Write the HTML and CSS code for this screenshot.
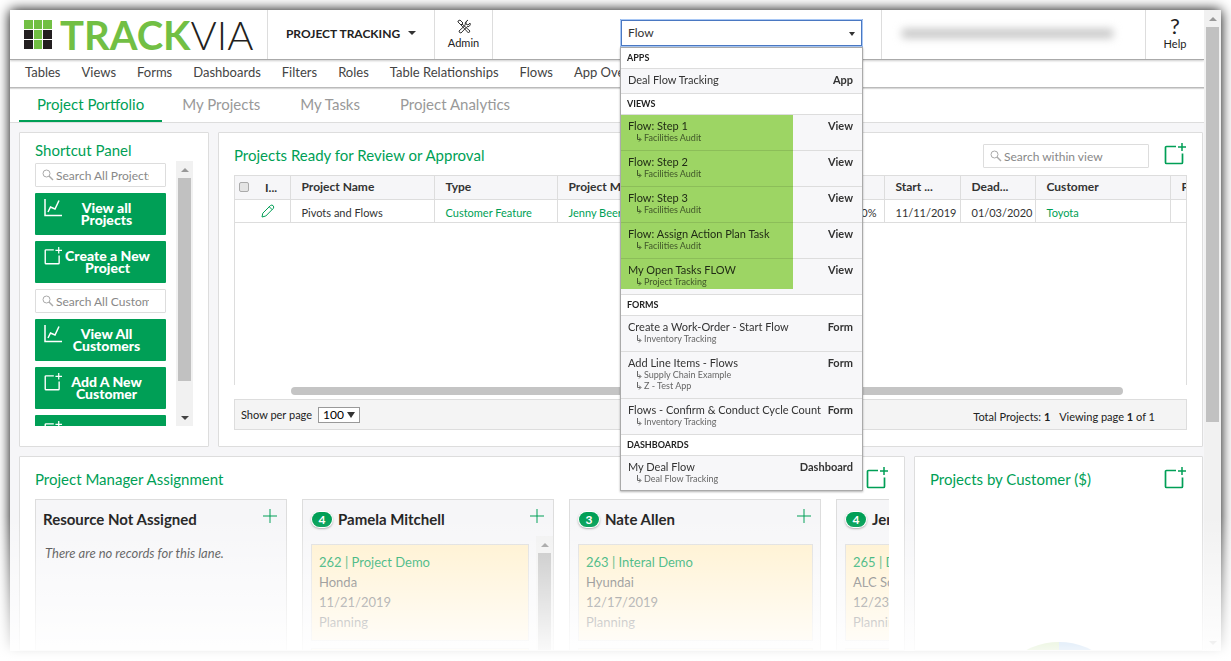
FILE: index.html
```html
<!DOCTYPE html>
<html lang="en">
  <head>
    <meta charset="utf-8">
    <title>TrackVia - Project Tracking</title>
    <link rel="stylesheet" href="styles.css">
  </head>
  <body>
    <svg class="sprite" aria-hidden="true">
      <symbol id="icon-new" viewBox="0 0 22 22">
        <path d="M12 3.500H2.500a1 1 0 0 0-1 1V19.500a1 1 0 0 0 1 1H17.500a1 1 0 0 0 1-1V10.500" fill="none" stroke="currentColor" stroke-width="1.700"/>
        <path d="M18 0v8M14 4h8" fill="none" stroke="currentColor" stroke-width="1.500"/>
      </symbol>
      <symbol id="icon-chart" viewBox="0 0 18 18">
        <path d="M1 0v16.500h17" fill="none" stroke="currentColor" stroke-width="1.500"/>
        <path d="M4 13l2.500-5 4.500 2 4-8.500" fill="none" stroke="currentColor" stroke-width="1.500"/>
      </symbol>
      <symbol id="icon-search" viewBox="0 0 12 12">
        <circle cx="4.500" cy="4.500" r="3.500" fill="none" stroke="currentColor"/>
        <path d="M7 7l4 4" stroke="currentColor" stroke-width="1.500"/>
      </symbol>
      <symbol id="icon-plus" viewBox="0 0 14 14">
        <path d="M7 0v14M0 7h14" stroke="currentColor"/>
      </symbol>
      <symbol id="icon-sub" viewBox="0 0 6 9">
        <path d="M1.500 1v5.500h3M3 4.500l2 2-2 2" fill="none" stroke="currentColor"/>
      </symbol>
      <symbol id="icon-pencil" viewBox="0 0 14 14">
        <path d="M1 13l.8-3.800L9.500 1.500q1.500-1 2.600.2t.3 2.600L4.800 12zM8.300 2.800l2.900 2.900" fill="none" stroke="currentColor"/>
      </symbol>
    </svg>

    <div class="window">
      <div class="page">
        <header class="header">
          <a class="logo" href="#" aria-label="TrackVia">
            <svg class="logo_mark" width="28" height="29" viewBox="0 0 28 29">
              <path fill="#72bf44" d="M0 0h9v9H0zM10 0h8v9h-8zM19 0h9v9h-9zM10 10h8v9h-8zM10 20h8v9h-8z"/>
              <path fill="#231f20" d="M0 10h9v9H0zM19 10h9v9h-9zM0 20h9v9H0zM19 20h9v9h-9z"/>
            </svg>
            <span class="logo_text"><b>TRACK</b>VIA</span>
          </a>
          <button class="app_menu">PROJECT TRACKING <span class="caret"></span></button>
          <button class="tool">
            <svg width="16" height="15" viewBox="0 0 16 15" fill="none" stroke="#333">
              <path d="M2 2l2-1 3 3-2 2-3-3zM6 5l8 7-1.500 2L5 6M12 1l-2 2v2l2 1 2-2q1 2-1 3.500l-2 .2-6 6.300q-2 0-2-2l6-5.500q-.5-4 3-5.500z"/>
            </svg>
            <span>Admin</span>
          </button>
          <div class="search">
            <input class="search_input" aria-label="Search application" value="Flow" autofocus>
            <span class="caret search_caret"></span>
            <div class="results">
              <h3>APPS</h3>
              <ul>
                <li><div>Deal Flow Tracking</div><b>App</b></li>
              </ul>
              <h3>VIEWS</h3>
              <ul class="marked">
                <li><div>Flow: Step 1<small><svg><use href="#icon-sub"/></svg>Facilities Audit</small></div><b>View</b></li>
                <li><div>Flow: Step 2<small><svg><use href="#icon-sub"/></svg>Facilities Audit</small></div><b>View</b></li>
                <li><div>Flow: Step 3<small><svg><use href="#icon-sub"/></svg>Facilities Audit</small></div><b>View</b></li>
                <li><div>Flow: Assign Action Plan Task<small><svg><use href="#icon-sub"/></svg>Facilities Audit</small></div><b>View</b></li>
                <li><div>My Open Tasks FLOW<small><svg><use href="#icon-sub"/></svg>Project Tracking</small></div><b>View</b></li>
              </ul>
              <h3>FORMS</h3>
              <ul>
                <li><div>Create a Work-Order - Start Flow<small><svg><use href="#icon-sub"/></svg>Inventory Tracking</small></div><b>Form</b></li>
                <li><div>Add Line Items - Flows<small><svg><use href="#icon-sub"/></svg>Supply Chain Example</small><small><svg><use href="#icon-sub"/></svg>Z - Test App</small></div><b>Form</b></li>
                <li><div>Flows - Confirm &amp; Conduct Cycle Count<small><svg><use href="#icon-sub"/></svg>Inventory Tracking</small></div><b>Form</b></li>
              </ul>
              <h3>DASHBOARDS</h3>
              <ul>
                <li><div>My Deal Flow<small><svg><use href="#icon-sub"/></svg>Deal Flow Tracking</small></div><b>Dashboard</b></li>
              </ul>
            </div>
          </div>
          <div class="user"><span class="user_name"></span></div>
          <button class="tool help">
            <span class="question">?</span>
            <span>Help</span>
          </button>
        </header>

        <nav class="nav">
          <a href="#">Tables</a>
          <a href="#">Views</a>
          <a href="#">Forms</a>
          <a href="#">Dashboards</a>
          <a href="#">Filters</a>
          <a href="#">Roles</a>
          <a href="#">Table Relationships</a>
          <a href="#">Flows</a>
          <a href="#">App Overview</a>
        </nav>

        <nav class="tabs">
          <a class="active" href="#">Project Portfolio</a>
          <a href="#">My Projects</a>
          <a href="#">My Tasks</a>
          <a href="#">Project Analytics</a>
        </nav>

        <main class="main">
          <div class="row">
            <section class="panel shortcuts">
              <h2>Shortcut Panel</h2>
              <div class="shortcut_body">
                <div class="shortcut_list">
                  <label class="find"><svg><use href="#icon-search"/></svg><input placeholder="Search All Projects" aria-label="Search All Projects"></label>
                  <button class="button"><svg><use href="#icon-chart"/></svg>View all Projects</button>
                  <button class="button wide"><svg><use href="#icon-new"/></svg>Create a New Project</button>
                  <label class="find"><svg><use href="#icon-search"/></svg><input placeholder="Search All Customers" aria-label="Search All Customers"></label>
                  <button class="button"><svg><use href="#icon-chart"/></svg>View All Customers</button>
                  <button class="button"><svg><use href="#icon-new"/></svg>Add A New Customer</button>
                  <button class="button" aria-label="Add"><svg><use href="#icon-new"/></svg></button>
                </div>
                <div class="scrollbar"><i class="up"></i><i class="thumb"></i><i class="down dark"></i></div>
              </div>
            </section>

            <section class="panel view">
              <div class="panel_head">
                <h2>Projects Ready for Review or Approval</h2>
                <label class="find"><svg><use href="#icon-search"/></svg><input placeholder="Search within view" aria-label="Search within view"></label>
                <button class="new" aria-label="Add record"><svg><use href="#icon-new"/></svg></button>
              </div>
              <div class="grid">
                <table>
                  <colgroup>
                    <col class="c_check"><col class="c_icon"><col class="c_name"><col class="c_type"><col class="c_manager">
                    <col class="c_done"><col class="c_start"><col class="c_dead"><col class="c_customer"><col class="c_last">
                  </colgroup>
                  <thead>
                    <tr>
                      <th class="check"><input type="checkbox" aria-label="Select all"></th>
                      <th class="icon">I...</th>
                      <th>Project Name</th>
                      <th>Type</th>
                      <th>Project Manager</th>
                      <th></th>
                      <th>Start ...</th>
                      <th>Dead...</th>
                      <th>Customer</th>
                      <th>Priority</th>
                    </tr>
                  </thead>
                  <tbody>
                    <tr>
                      <td class="check"></td>
                      <td class="icon"><a href="#" aria-label="Edit"><svg><use href="#icon-pencil"/></svg></a></td>
                      <td>Pivots and Flows</td>
                      <td><a href="#">Customer Feature</a></td>
                      <td><a href="#">Jenny Beer</a></td>
                      <td class="number">100%</td>
                      <td>11/11/2019</td>
                      <td>01/03/2020</td>
                      <td><a href="#">Toyota</a></td>
                      <td></td>
                    </tr>
                  </tbody>
                </table>
              </div>
              <div class="track"></div>
              <div class="paging">
                <label for="per_page">Show per page</label>
                <select id="per_page"><option>100</option></select>
                <span class="caret"></span>
                <p>Total Projects: <b>1</b> <span>Viewing page <b>1</b> of 1</span></p>
              </div>
            </section>
          </div>

          <div class="row row_bottom">
            <section class="panel board">
              <div class="panel_head">
                <h2>Project Manager Assignment</h2>
                <button class="new" aria-label="Add record"><svg><use href="#icon-new"/></svg></button>
              </div>
              <div class="lanes">
                <div class="lane">
                  <div class="lane_head"><h4>Resource Not Assigned</h4><svg><use href="#icon-plus"/></svg></div>
                  <p class="empty">There are no records for this lane.</p>
                </div>
                <div class="lane">
                  <div class="lane_head"><span class="count">4</span><h4>Pamela Mitchell</h4><svg><use href="#icon-plus"/></svg></div>
                  <div class="lane_body">
                    <div class="cards">
                      <div class="card"><a href="#">262 | Project Demo</a><p>Honda</p><p>11/21/2019</p><p>Planning</p></div>
                      <div class="card"></div>
                    </div>
                    <div class="scrollbar"><i class="up"></i><i class="thumb"></i></div>
                  </div>
                </div>
                <div class="lane">
                  <div class="lane_head"><span class="count">3</span><h4>Nate Allen</h4><svg><use href="#icon-plus"/></svg></div>
                  <div class="lane_body">
                    <div class="cards">
                      <div class="card"><a href="#">263 | Interal Demo</a><p>Hyundai</p><p>12/17/2019</p><p>Planning</p></div>
                      <div class="card"></div>
                    </div>
                  </div>
                </div>
                <div class="lane">
                  <div class="lane_head"><span class="count">4</span><h4>Jenny Beer</h4></div>
                  <div class="lane_body">
                    <div class="cards">
                      <div class="card"><a href="#">265 | Demo</a><p>ALC Schools</p><p>12/23/2019</p><p>Planning</p></div>
                      <div class="card"></div>
                    </div>
                  </div>
                </div>
              </div>
            </section>

            <section class="panel chart">
              <div class="panel_head">
                <h2>Projects by Customer ($)</h2>
                <button class="new" aria-label="Add record"><svg><use href="#icon-new"/></svg></button>
              </div>
              <svg class="pie" viewBox="0 0 140 140">
                <path d="M70 70V0A70 70 0 0 0 0 70z" fill="#8bc34a"/>
                <path d="M70 70V0A70 70 0 0 1 140 70z" fill="#4a90d9"/>
              </svg>
            </section>
          </div>
        </main>
      </div>
      <div class="scrollbar page_scroll"><i class="up"></i><i class="thumb"></i><i class="down"></i></div>
    </div>
    <div class="fade"></div>
  </body>
</html>
```

FILE: styles.css
```css
* {
  box-sizing: border-box;
}

body {
  margin: 0;
  padding: 10px;
  height: 100vh;
  overflow: hidden;
  background: #fff;
  color: #333;
  font-family: Lato, "Liberation Sans", sans-serif;
  font-size: 12px;
}

a {
  color: #009f56;
  text-decoration: none;
}

h2, h3, h4, p, ul {
  margin: 0;
  padding: 0;
}

button, input, select {
  font-family: inherit;
}

.sprite {
  display: none;
}

.window {
  display: flex;
  height: calc(100vh - 20px);
  overflow: hidden;
  background: #fff;
  box-shadow: 0 0 12px #000;
}

.page {
  display: flex;
  flex-direction: column;
  flex: 1;
  min-width: 0;
}

/* header */
.header {
  display: flex;
  height: 50px;
  flex-shrink: 0;
  border-bottom: 1px solid #aaa;
  box-shadow: 0 1px 2px rgba(0, 0, 0, 0.2);
}

.logo {
  display: flex;
  align-items: center;
  gap: 8px;
  width: 258px;
  padding-left: 14px;
  border-right: 1px solid #ddd;
  color: #231f20;
}

.logo_text {
  font-size: 40px;
  line-height: 48px;
  font-weight: 300;
}

.logo_text b {
  color: #72bf44;
  font-weight: 700;
}

.app_menu, .tool {
  border: 0;
  border-right: 1px solid #ddd;
  background: none;
  color: #222;
}

.app_menu {
  display: flex;
  align-items: center;
  justify-content: center;
  gap: 8px;
  width: 167px;
  padding: 0 0 3px;
  font-size: 12px;
  font-weight: 700;
}

.caret {
  border: 4px solid transparent;
  border-top-color: #333;
  border-bottom: 0;
}

.tool {
  display: flex;
  flex-direction: column;
  align-items: center;
  width: 58px;
  padding: 9px 0 0;
  gap: 2px;
  font-size: 11px;
  line-height: 14px;
}

.tool .question {
  font-size: 22px;
  line-height: 22px;
}

.help {
  width: 58px;
  padding-top: 5px;
  gap: 0;
  border-right: 0;
}

.search {
  position: relative;
  width: 243px;
  margin: 9px 18px 0 auto;
}

.search_input {
  display: block;
  width: 100%;
  height: 28px;
  padding: 0 6px 2px;
  border: 2px solid #4a78c2;
  border-radius: 1px;
  outline: 1px solid #a9c8f5;
  outline-offset: -1px;
  color: #333;
  font-size: 12px;
}

.search_caret {
  position: absolute;
  top: 13px;
  right: 8px;
  border-width: 4px 3px 0;
}

.results {
  position: absolute;
  z-index: 2;
  top: 28px;
  left: 0;
  right: 0;
  border: 1px solid #aaa;
  background: #f7f7f9;
  box-shadow: 0 1px 2px rgba(0, 0, 0, 0.3);
  font-size: 11px;
}

.results h3 {
  height: 21px;
  padding-left: 6px;
  border-bottom: 1px solid #ddd;
  background: #fff;
  color: #222;
  font-size: 9px;
  line-height: 20px;
}

.results ul {
  position: relative;
  list-style: none;
}

.results li {
  display: flex;
  justify-content: space-between;
  padding: 4px 9px 7px 7px;
  border-bottom: 1px solid #ddd;
  line-height: 13px;
  white-space: nowrap;
}

.results ul:last-child li {
  padding-bottom: 6px;
  border-bottom: 0;
}

.results small {
  display: flex;
  align-items: center;
  gap: 2px;
  padding-left: 8px;
  color: #666;
  font-size: 9px;
  line-height: 11px;
}

.results small svg {
  width: 6px;
  height: 9px;
}

/* highlight over the matching views */
.results .marked:after {
  content: "";
  position: absolute;
  top: 0;
  left: 0;
  width: 172px;
  bottom: 6px;
  background: #a2dc66;
  mix-blend-mode: multiply;
}

.user {
  display: flex;
  align-items: center;
  width: 265px;
  padding: 0 32px 3px 20px;
  border-left: 1px solid #ddd;
  border-right: 1px solid #ddd;
}

.user_name {
  flex: 1;
  height: 9px;
  background: #c4c4c4;
  filter: blur(4px);
}

/* navigation */
.nav {
  display: flex;
  gap: 21px;
  height: 28px;
  flex-shrink: 0;
  padding-left: 15px;
  border-bottom: 1px solid #bbb;
  box-shadow: 0 1px 1px rgba(0, 0, 0, 0.15);
  font-size: 13px;
  line-height: 25px;
  white-space: nowrap;
}

.nav a {
  color: #444;
}

.tabs {
  display: flex;
  height: 35px;
  flex-shrink: 0;
  padding-left: 9px;
  border-bottom: 1px solid #ddd;
  font-size: 15px;
  line-height: 33px;
}

.tabs a {
  height: 34px;
  padding: 0 20px;
  color: #999;
}

.tabs .active {
  padding: 0 18px;
  border-bottom: 2px solid #009f56;
  color: #009f56;
}

/* panels */
.main {
  display: flex;
  flex-direction: column;
  flex: 1;
  gap: 9px;
  min-height: 0;
  padding: 9px 1px 0 9px;
  background: #f6f6f8;
}

.row {
  display: flex;
  gap: 9px;
}

.row_bottom {
  display: grid;
  grid-template-columns: 886fr 289fr;
  flex: 1;
  min-height: 0;
}

.panel {
  min-width: 0;
  min-height: 0;
  padding: 10px 15px 0;
  border: 1px solid #ddd;
  border-radius: 1px;
  background: #fff;
}

.panel h2 {
  color: #009f56;
  font-size: 15px;
  font-weight: 400;
  line-height: 18px;
}

.panel_head {
  display: flex;
  align-items: center;
  height: 26px;
}

.panel_head h2 {
  flex: 1;
  padding-bottom: 2px;
}

.new {
  width: 22px;
  height: 22px;
  margin: 0 1px 4px 0;
  padding: 0;
  border: 0;
  background: none;
  color: #009f56;
}

.new svg {
  display: block;
  width: 22px;
  height: 22px;
}

.find {
  display: flex;
  align-items: center;
  gap: 2px;
  height: 24px;
  padding: 0 16px 0 6px;
  border: 1px solid #ddd;
  border-radius: 1px;
  background: #fff;
  color: #aaa;
}

.find svg {
  width: 12px;
  height: 12px;
  flex-shrink: 0;
}

.find input {
  width: 100%;
  min-width: 0;
  padding: 0;
  border: 0;
  font-size: 12px;
}

.find input::placeholder {
  color: #888;
}

.view .find {
  width: 166px;
  margin-right: 15px;
}

.shortcuts {
  width: 190px;
  height: 315px;
  flex-shrink: 0;
  padding-top: 8px;
}

.shortcut_body {
  display: flex;
  gap: 10px;
  height: 265px;
  margin-top: 2px;
}

.shortcut_list {
  display: flex;
  flex-direction: column;
  gap: 6px;
  width: 131px;
  overflow: hidden;
  padding-top: 2px;
}

.shortcut_list .find, .button {
  flex-shrink: 0;
}

.button {
  position: relative;
  height: 42px;
  padding: 0 18px 0 30px;
  border: 0;
  border-radius: 1px;
  background: #009f56;
  color: #fff;
  font-size: 14px;
  font-weight: 900;
  line-height: 12px;
}

.button.wide {
  padding: 0 10px 0 24px;
}

.button svg {
  position: absolute;
  top: 6px;
  left: 9px;
  width: 18px;
  height: 18px;
}

.scrollbar {
  display: flex;
  flex-direction: column;
  align-items: center;
  width: 17px;
  flex-shrink: 0;
  background: #f1f1f1;
}

.scrollbar .up, .scrollbar .down {
  margin: 7px 0 6px;
  border: 4px solid transparent;
}

.scrollbar .up {
  border-top: 0;
  border-bottom-color: #999;
}

.scrollbar .down {
  margin-top: auto;
  border-bottom: 0;
  border-top-color: #999;
}

.scrollbar .dark {
  border-top-color: #444;
}

.scrollbar .thumb {
  width: 13px;
  height: 203px;
  background: #c1c1c1;
}

.page_scroll .thumb {
  height: 395px;
}

/* record table */
.view {
  flex: 1;
}

.grid {
  height: 210px;
  margin-top: 6px;
  overflow: hidden;
  border: 1px solid #ddd;
  border-bottom: 0;
}

.grid table {
  width: 1079px;
  table-layout: fixed;
  border-collapse: collapse;
}

.c_check { width: 21px; }
.c_icon { width: 34px; }
.c_name { width: 144px; }
.c_type { width: 123px; }
.c_manager { width: 147px; }
.c_done { width: 180px; }
.c_start { width: 76px; }
.c_dead { width: 75px; }
.c_customer { width: 135px; }
.c_last { width: 144px; }

.grid th, .grid td {
  height: 23px;
  padding: 0 0 0 11px;
  border-right: 1px solid #ddd;
  border-bottom: 1px solid #ddd;
  text-align: left;
  white-space: nowrap;
}

.grid td {
  padding-top: 3px;
  font-size: 11px;
}

.grid th {
  padding-bottom: 1px;
  background: #f6f6f8;
  font-size: 12px;
}

.grid .check {
  padding: 0;
  border-right: 0;
  text-align: center;
}

.grid .check input {
  display: block;
  appearance: none;
  width: 10px;
  height: 10px;
  margin: 0 0 0 4px;
  border: 1px solid #aaa;
  border-radius: 2px;
  background: #e4e4e4;
}

.grid .icon {
  padding: 0 0 0 9px;
}

.grid td.icon {
  padding-left: 5px;
}

.grid .icon svg {
  display: block;
  width: 14px;
  height: 14px;
}

.grid .number {
  padding-right: 7px;
  text-align: right;
}

.track {
  width: 832px;
  max-width: 88%;
  height: 8px;
  margin: 2px 0 4px 57px;
  border-radius: 4px;
  background: #c4c4c4;
}

.paging {
  display: flex;
  align-items: center;
  height: 31px;
  padding: 0 31px 0 6px;
  border: 1px solid #ddd;
  background: #f4f4f4;
  color: #222;
  font-size: 11px;
}

.paging select {
  appearance: none;
  width: 42px;
  height: 16px;
  margin-left: 6px;
  padding: 0 4px;
  border: 1px solid #999;
  border-radius: 0;
  background: #fff;
  font-size: 12px;
  line-height: 12px;
}

.paging .caret {
  margin-left: -13px;
  border-width: 6px 4px 0;
  pointer-events: none;
}

.paging p {
  margin-left: auto;
  padding-top: 4px;
}

.paging p span {
  margin-left: 6px;
}

/* lanes */
.board, .chart {
  overflow: hidden;
}

.lanes {
  display: flex;
  gap: 15px;
  height: 100%;
  margin-top: 6px;
  overflow: hidden;
}

.lane {
  display: flex;
  flex-direction: column;
  width: 252px;
  flex-shrink: 0;
  border: 1px solid #ddd;
  background: #f6f6f8;
}

.lane_head {
  display: flex;
  align-items: center;
  height: 36px;
  flex-shrink: 0;
  padding: 2px 9px 0 7px;
}

.lane_head h4 {
  flex: 1;
  color: #222;
  font-size: 15px;
}

.lane_head svg {
  width: 14px;
  height: 14px;
  margin-bottom: 6px;
  color: #009f56;
}

.count {
  width: 20px;
  margin: 0 6px 0 2px;
  border-radius: 8px;
  background: #009f56;
  box-shadow: 0 0 0 1px #fff, 0 1px 2px 1px #aaa;
  color: #fff;
  font-weight: 700;
  line-height: 15px;
  text-align: center;
}

.empty {
  padding: 9px 9px;
  font-size: 13px;
  font-style: italic;
}

.lane_body {
  display: flex;
  flex: 1;
}

.cards {
  flex: 1;
  padding: 8px 7px 0 8px;
}

.card {
  height: 97px;
  margin-bottom: 7px;
  padding: 7px;
  border: 1px solid #ddd;
  background: #fff0cc;
  color: #555;
  font-size: 13px;
  line-height: 20px;
}

.card a {
  display: block;
}

.pie {
  display: block;
  width: 140px;
  margin: 149px auto 0;
}

/* fades the bottom of the window into the page */
.fade {
  position: absolute;
  z-index: 3;
  left: 0;
  right: 0;
  bottom: 0;
  height: 145px;
  background: linear-gradient(rgba(255, 255, 255, 0), rgba(255, 255, 255, 0.9) 92%, #fff);
  pointer-events: none;
}
```
